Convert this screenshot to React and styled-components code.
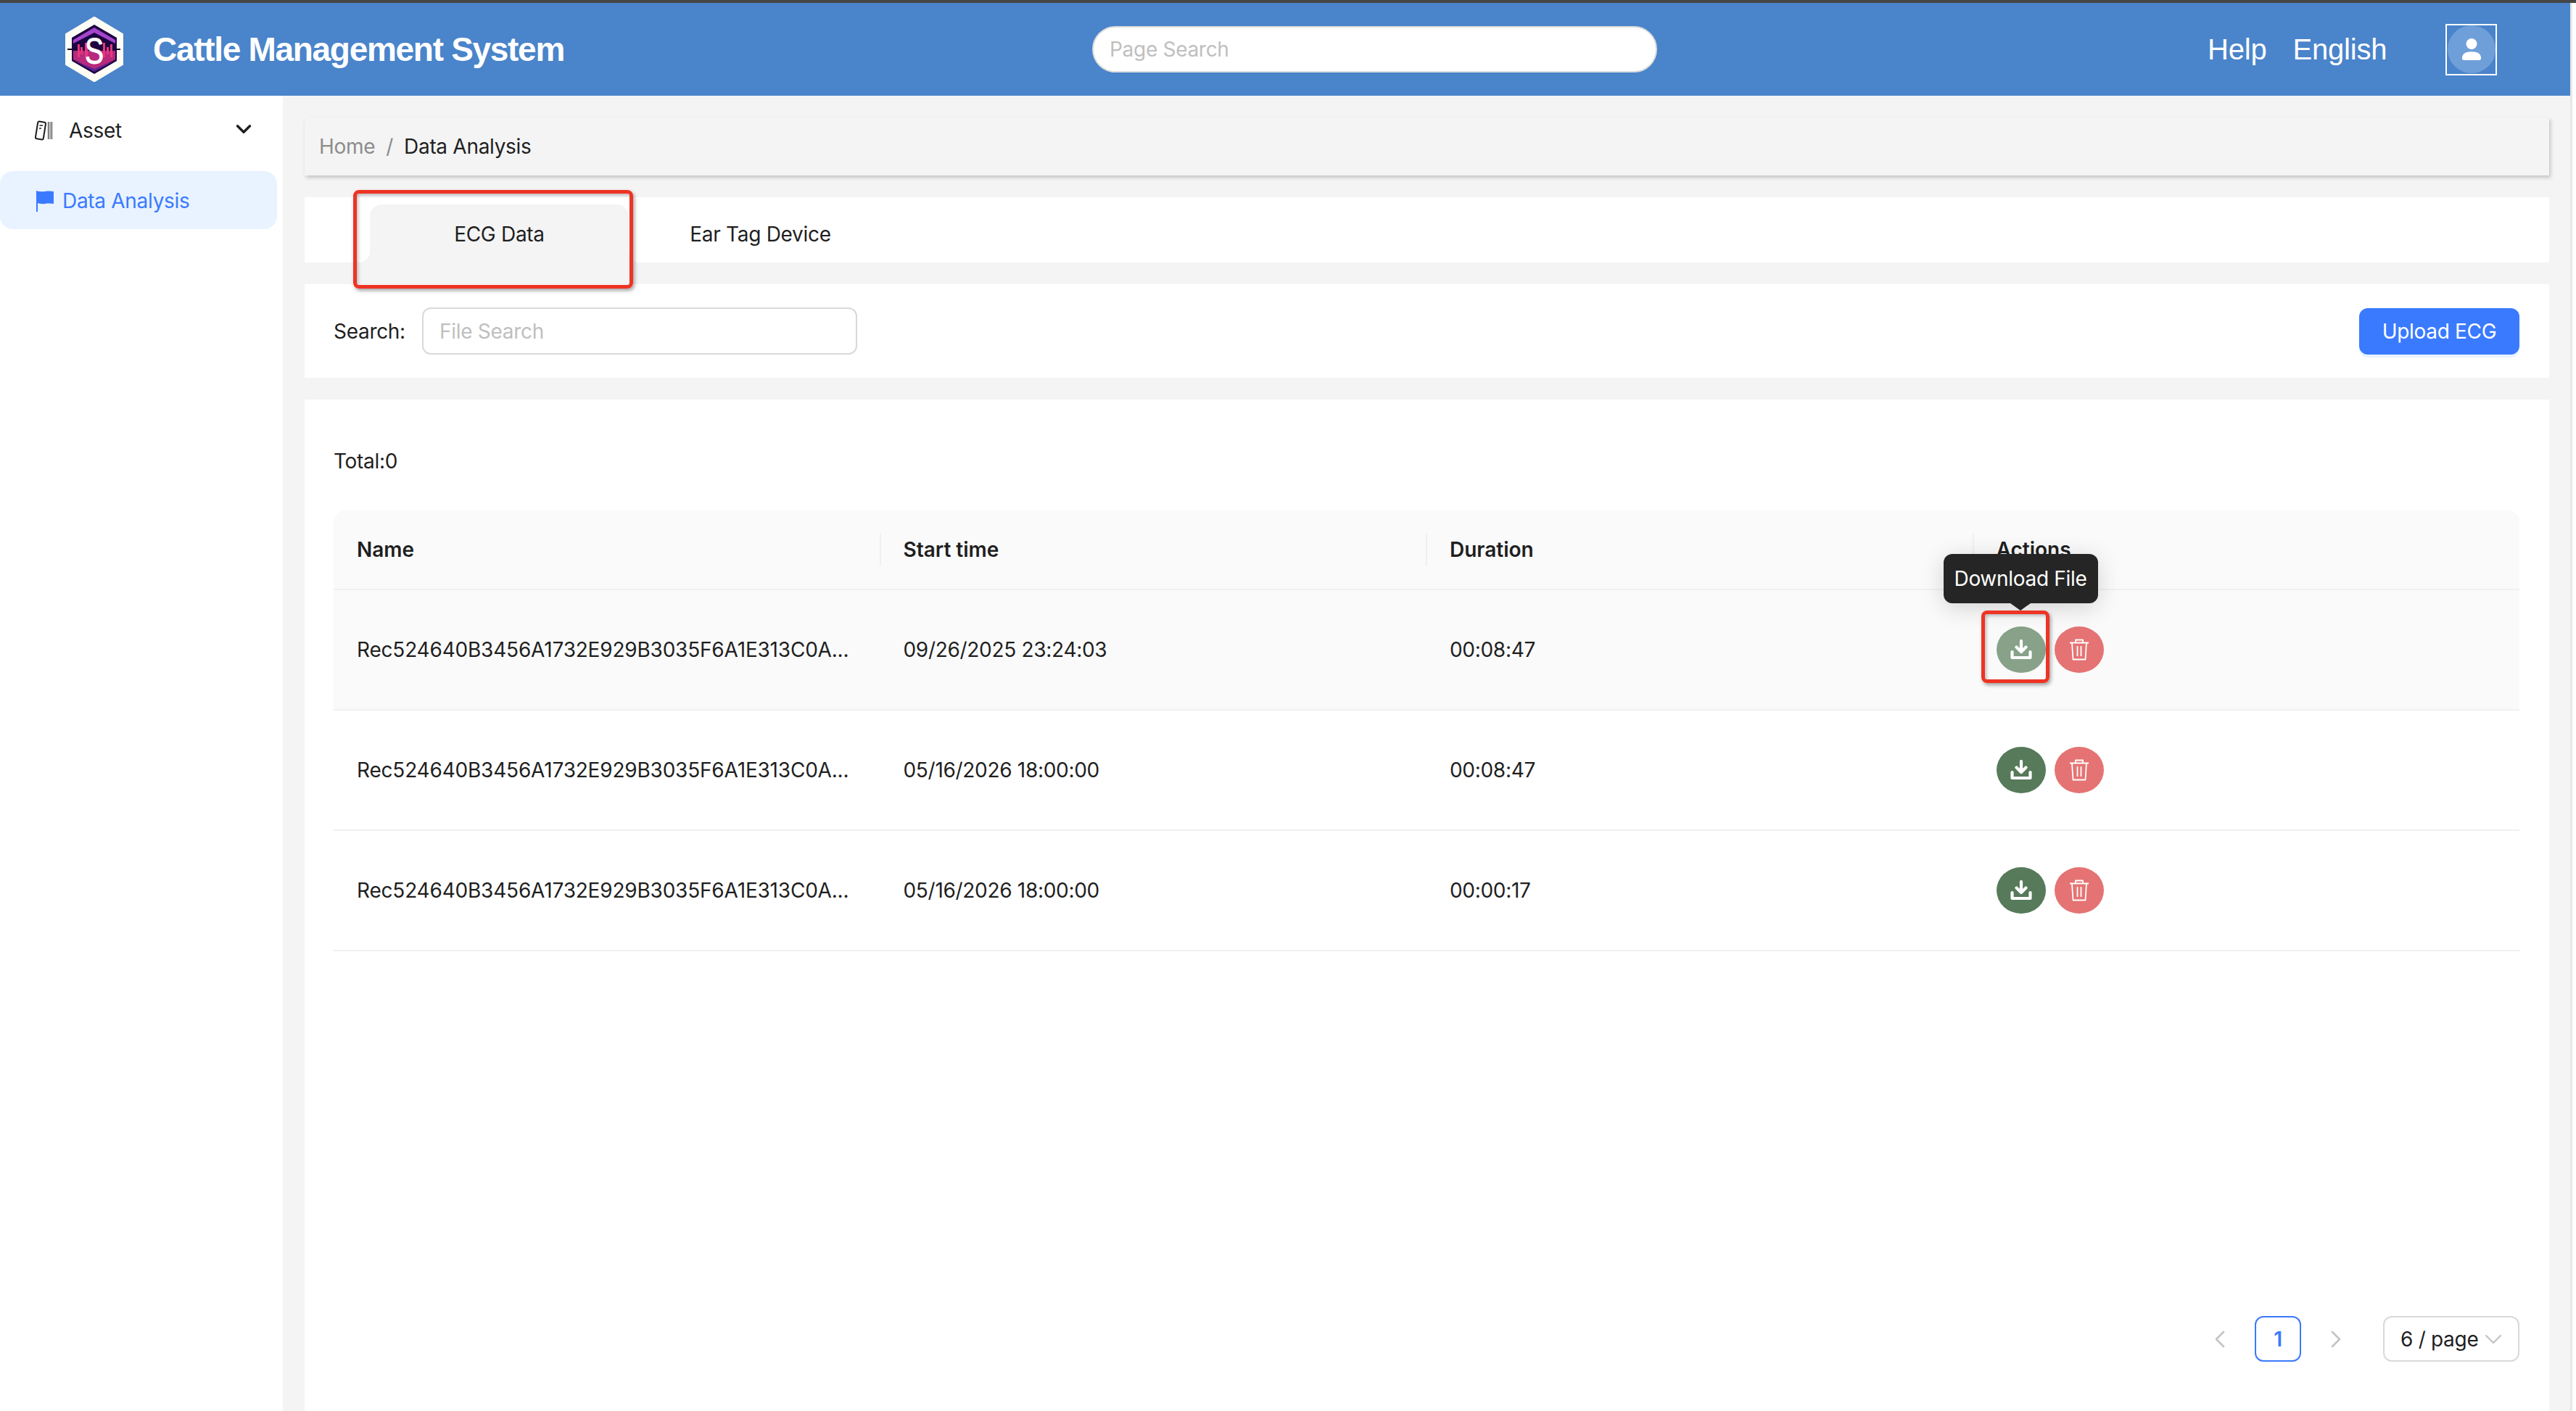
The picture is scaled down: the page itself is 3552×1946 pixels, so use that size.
import React from 'react';
import styled, { createGlobalStyle } from 'styled-components';
import { ChevronDown, ChevronLeft, ChevronRight } from 'lucide-react';

const GlobalStyle = createGlobalStyle`
  html, body {
    margin: 0;
    padding: 0;
    background: #ffffff;
  }
  * {
    box-sizing: border-box;
  }
`;

const Screen = styled.div`
  width: 3552px;
  height: 1946px;
  display: flex;
  flex-direction: column;
  overflow: hidden;
  font-family: Inter, "Liberation Sans", sans-serif;
  font-size: 28px;
  letter-spacing: -0.3px;
  color: #1f1f1f;
`;

const WindowEdge = styled.div`
  height: 4px;
  flex: none;
  background: #454545;
`;

const Frame = styled.div`
  flex: 1;
  display: flex;
  min-height: 0;
`;

const Page = styled.div`
  flex: 1;
  display: flex;
  flex-direction: column;
  min-width: 0;
`;

const Scrollbar = styled.div`
  width: 8px;
  flex: none;
  background: #ffffff;
  border-left: 3px solid #e8e8e8;
`;

const TopBar = styled.header`
  height: 128px;
  flex: none;
  display: grid;
  grid-template-columns: 1506px 779px 1fr;
  align-items: center;
  background: #4a84ca;
  color: #ffffff;
`;

const Brand = styled.div`
  display: flex;
  align-items: center;
  gap: 41px;
  padding-left: 90px;
`;

const BrandName = styled.div`
  font-family: "Liberation Sans", Arial, sans-serif;
  font-weight: 700;
  font-size: 46px;
  letter-spacing: -1.3px;
`;

const PageSearch = styled.input`
  width: 779px;
  height: 64px;
  padding: 0 22px;
  border: 2px solid #dcdcdc;
  border-radius: 32px;
  background: #ffffff;
  font-family: Inter, sans-serif;
  font-size: 28px;
  letter-spacing: -0.3px;
  outline: none;

  &::placeholder {
    color: #bfbfbf;
    opacity: 1;
  }
`;

const TopActions = styled.div`
  display: flex;
  align-items: center;
  padding-left: 759px;
`;

const TopLink = styled.span`
  font-family: "Liberation Sans", Arial, sans-serif;
  font-size: 40px;
  letter-spacing: -0.2px;
  margin-right: ${(p) => p.$gap}px;
`;

const AvatarFrame = styled.div`
  width: 71px;
  height: 71px;
  display: flex;
  align-items: center;
  justify-content: center;
  border: 2px solid #ffffff;
`;

const Avatar = styled.div`
  width: 66px;
  height: 66px;
  display: flex;
  align-items: center;
  justify-content: center;
  border-radius: 50%;
  background: #6f9fd8;
`;

const Body = styled.div`
  flex: 1;
  display: flex;
  min-height: 0;
`;

const Sidebar = styled.aside`
  width: 390px;
  flex: none;
  padding-top: 8px;
  background: #ffffff;
`;

const GroupRow = styled.div`
  height: 80px;
  margin: 0 8px 16px 0;
  padding: 0 29px 0 48px;
  display: flex;
  align-items: center;
  gap: 21px;

  span {
    flex: 1;
  }
`;

const GroupChevron = styled(ChevronDown)`
  margin-top: -4px;
`;

const MenuItem = styled.div`
  height: 80px;
  margin-right: 8px;
  padding: 2px 0 0 50px;
  display: flex;
  align-items: center;
  gap: 12px;
  border-radius: 18px;
  background: #e8f3ff;
  color: #3a7afe;
`;

const Content = styled.main`
  flex: 1;
  min-width: 0;
  display: flex;
  flex-direction: column;
  gap: 30px;
  padding: 30px 29px 0 30px;
  background: #f4f4f4;
`;

const Breadcrumb = styled.nav`
  height: 80px;
  flex: none;
  display: flex;
  align-items: center;
  padding-left: 20px;
  background: #f4f4f4;
  box-shadow: 2px 3px 5px rgba(0, 0, 0, 0.2);
`;

const Crumb = styled.span`
  color: ${(p) => (p.$current ? '#1f1f1f' : '#8c8c8c')};
`;

const CrumbDivider = styled.span`
  margin: 0 15px;
  color: #8c8c8c;
`;

const TabBar = styled.div`
  height: 90px;
  flex: none;
  display: flex;
  align-items: flex-end;
  padding-left: 90px;
  background: #ffffff;
`;

const Tab = styled.div`
  position: relative;
  width: 357px;
  height: 80px;
  padding-top: 2px;
  display: flex;
  align-items: center;
  justify-content: center;
  border-radius: 16px 16px 0 0;
  background: ${(p) => (p.$active ? '#f4f4f4' : 'transparent')};

  & + & {
    margin-left: 3px;
  }

  ${(p) =>
    p.$active &&
    `
    &::before, &::after {
      content: '';
      position: absolute;
      bottom: 0;
      width: 16px;
      height: 16px;
    }
    &::before {
      left: -16px;
      background: radial-gradient(circle at 0 0, #ffffff 16px, #f4f4f4 16.5px);
    }
    &::after {
      right: -16px;
      background: radial-gradient(circle at 100% 0, #ffffff 16px, #f4f4f4 16.5px);
    }
  `}
`;

const Callout = styled.div`
  position: absolute;
  top: ${(p) => p.$top}px;
  left: ${(p) => p.$left}px;
  width: ${(p) => p.$width}px;
  height: ${(p) => p.$height}px;
  border: 5px solid #ee3424;
  border-radius: 8px;
  box-shadow: 2px 3px 5px rgba(0, 0, 0, 0.35), inset 2px 2px 4px rgba(0, 0, 0, 0.25);
  pointer-events: none;
  z-index: 3;
`;

const FilterPanel = styled.section`
  height: 129px;
  flex: none;
  display: flex;
  align-items: center;
  padding: 0 41px 0 40px;
  background: #ffffff;
`;

const FilterLabel = styled.label`
  width: 122px;
`;

const FileSearch = styled.input`
  width: 600px;
  height: 65px;
  padding: 0 22px;
  border: 2px solid #d9d9d9;
  border-radius: 12px;
  font-family: Inter, sans-serif;
  font-size: 28px;
  letter-spacing: -0.3px;
  outline: none;

  &::placeholder {
    color: #bfbfbf;
    opacity: 1;
  }
`;

const UploadButton = styled.button`
  width: 221px;
  height: 64px;
  margin-left: auto;
  border: none;
  border-radius: 12px;
  background: #3a7afe;
  box-shadow: 0 4px 0 #e8f3ff;
  color: #ffffff;
  font-family: Inter, sans-serif;
  font-size: 28px;
  letter-spacing: -0.3px;
`;

const TablePanel = styled.section`
  flex: 1;
  min-height: 0;
  display: flex;
  flex-direction: column;
  padding: 68px 41px 68px 40px;
  background: #ffffff;
`;

const Total = styled.div`
  height: 34px;
  line-height: 34px;
  margin-bottom: 51px;
`;

const Row = styled.div`
  display: grid;
  grid-template-columns: repeat(4, 1fr);
  height: ${(p) => p.$height}px;
  background: ${(p) => (p.$shaded ? '#fafafa' : '#ffffff')};
  border-bottom: 2px solid #f0f0f0;
  border-radius: ${(p) => (p.$head ? '16px 16px 0 0' : '0')};
  font-weight: ${(p) => (p.$head ? 600 : 400)};
`;

const Cell = styled.div`
  position: relative;
  display: flex;
  align-items: center;
  padding-left: 32px;
  white-space: nowrap;
`;

const NameCell = styled(Cell)`
  letter-spacing: -0.2px;
`;

const HeadCell = styled(Cell)`
  letter-spacing: 0;

  &:not(:first-child)::before {
    content: '';
    position: absolute;
    left: -1px;
    top: 32px;
    height: 44px;
    width: 2px;
    background: #f0f0f0;
  }
`;

const RoundButton = styled.button`
  position: relative;
  width: 68px;
  height: 64px;
  padding: 0;
  display: flex;
  align-items: center;
  justify-content: center;
  border: none;
  border-radius: 50%;
  background: ${(p) => p.$color};
`;

const ActionGroup = styled.div`
  display: flex;
  gap: 12px;
`;

const Tooltip = styled.div`
  position: absolute;
  top: -100px;
  left: -73px;
  width: 213px;
  height: 68px;
  display: flex;
  align-items: center;
  justify-content: center;
  border-radius: 12px;
  background: #252525;
  box-shadow: 0 6px 32px rgba(0, 0, 0, 0.16);
  color: #ffffff;
  font-family: Inter, sans-serif;
  font-size: 28px;
  letter-spacing: -0.3px;
  font-weight: 400;
  z-index: 2;

  &::after {
    content: '';
    position: absolute;
    left: 92px;
    bottom: -10px;
    border-style: solid;
    border-width: 10px 14px 0;
    border-color: #252525 transparent transparent;
  }
`;

const Pager = styled.div`
  margin-top: auto;
  display: flex;
  justify-content: flex-end;
  align-items: center;
`;

const PagerArrow = styled.div`
  width: 64px;
  height: 63px;
  display: flex;
  align-items: center;
  justify-content: center;
  color: #c4c4c4;
`;

const PageNumber = styled.div`
  width: 64px;
  height: 63px;
  margin: 0 16px;
  display: flex;
  align-items: center;
  justify-content: center;
  border: 2px solid #3a7afe;
  border-radius: 12px;
  color: #3a7afe;
  font-weight: 600;
`;

const PageSize = styled.div`
  width: 188px;
  height: 63px;
  margin-left: 33px;
  padding: 0 14px 0 22px;
  display: flex;
  align-items: center;
  justify-content: space-between;
  border: 2px solid #d9d9d9;
  border-radius: 12px;
`;

const Logo = () => (
  <svg width="80" height="90" viewBox="0 0 80 90">
    <path d="M40 0 L80 24 V66 L40 90 L0 66 V24 Z" fill="#fdfdf6" stroke="#fdfdf6" strokeLinejoin="round" />
    <path d="M40 11 L71 29 V61 L40 79 L9 61 V29 Z" fill="#1d0540" />
    <path d="M40 15 L69 32 V37 L40 22 L11 37 V32 Z" fill="#a545cc" />
    <path d="M11 47 H69 V59 L40 74 L11 59 Z" fill="#b72a7c" />
    <path d="M11 60 L40 76 L69 60 L40 72 Z" fill="#5c2294" />
    <path d="M17 38h3v18h-3zM27 36h4v20h-4zM52 36h3v20h-3zM62 38h3v18h-3zM21 42h3v10h-3zM57 42h3v10h-3z" fill="#e9367f" />
    <path d="M3 45 H11 M69 45 H76" stroke="#160528" strokeWidth="2" />
    <text transform="translate(40 65) scale(0.78 1)" textAnchor="middle" fontFamily="Liberation Sans, sans-serif" fontSize="50" stroke="#ffffff" strokeWidth="1" fill="#ffffff">S</text>
  </svg>
);

const UserIcon = () => (
  <svg width="28" height="30" viewBox="0 0 30 32" fill="#ffffff">
    <circle cx="15" cy="8" r="8" />
    <path d="M1 29 C1 23 6 19.500 15 19.500 C24 19.500 29 23 29 29 C29 31 28 32 26 32 H4 C2 32 1 31 1 29 Z" />
  </svg>
);

const AssetIcon = () => (
  <svg width="26" height="28" viewBox="0 0 26 28" fill="none" stroke="#1f1f1f">
    <rect x="2.500" y="2" width="11" height="24" rx="2" strokeWidth="2" transform="rotate(9 8 14)" />
    <path d="M6.500 7 H11 M6 11 H9" strokeWidth="1.600" />
    <path d="M18.500 2 V26 M21 2 V26 M23.500 2 V26" strokeWidth="1" />
  </svg>
);

const FlagIcon = () => (
  <svg width="24" height="29" viewBox="0 0 24 29">
    <path d="M0 0 C8 3 14 -1 24 1 V18 C14 16 8 20 2 17 V29 H0 Z" fill="#3a7afe" />
  </svg>
);

const DownloadIcon = () => (
  <svg width="30" height="28" viewBox="0 0 30 28" fill="none" stroke="#ffffff" strokeWidth="4.200" strokeLinecap="round" strokeLinejoin="round">
    <path d="M15 2 V16 M8.500 10.500 L15 17 L21.500 10.500" />
    <path d="M2.500 17 V25 H27.500 V17" />
  </svg>
);

const TrashIcon = () => (
  <svg width="28" height="30" viewBox="0 0 28 30" fill="none" stroke="#ffffff" strokeWidth="1.800" strokeLinejoin="round">
    <path d="M1 5.500 H27 M9 5 V1.500 H19 V5" />
    <path d="M4 5.500 L5.500 28.500 H22.500 L24 5.500" />
    <path d="M11.500 10 V24 M16.500 10 V24" />
  </svg>
);

const RECORDS = [
  { name: 'Rec524640B3456A1732E929B3035F6A1E313C0A...', start: '09/26/2025 23:24:03', duration: '00:08:47', hover: true },
  { name: 'Rec524640B3456A1732E929B3035F6A1E313C0A...', start: '05/16/2026 18:00:00', duration: '00:08:47' },
  { name: 'Rec524640B3456A1732E929B3035F6A1E313C0A...', start: '05/16/2026 18:00:00', duration: '00:00:17' },
];

function App() {
  return (
    <Screen>
      <GlobalStyle />
      <WindowEdge />
      <Frame>
        <Page>
          <TopBar>
            <Brand>
              <Logo />
              <BrandName>Cattle Management System</BrandName>
            </Brand>
            <PageSearch placeholder="Page Search" />
            <TopActions>
              <TopLink $gap={36}>Help</TopLink>
              <TopLink $gap={81}>English</TopLink>
              <AvatarFrame>
                <Avatar>
                  <UserIcon />
                </Avatar>
              </AvatarFrame>
            </TopActions>
          </TopBar>
          <Body>
            <Sidebar>
              <GroupRow>
                <AssetIcon />
                <span>Asset</span>
                <GroupChevron size={34} strokeWidth={2.400} color="#1f1f1f" />
              </GroupRow>
              <MenuItem>
                <FlagIcon />
                Data Analysis
              </MenuItem>
            </Sidebar>
            <Content>
              <Breadcrumb>
                <Crumb>Home</Crumb>
                <CrumbDivider>/</CrumbDivider>
                <Crumb $current>Data Analysis</Crumb>
              </Breadcrumb>
              <TabBar>
                <Tab $active>
                  ECG Data
                  <Callout $top={-20} $left={-23} $width={386} $height={136} />
                </Tab>
                <Tab>Ear Tag Device</Tab>
              </TabBar>
              <FilterPanel>
                <FilterLabel>Search:</FilterLabel>
                <FileSearch placeholder="File Search" />
                <UploadButton>Upload ECG</UploadButton>
              </FilterPanel>
              <TablePanel>
                <Total>Total:0</Total>
                <Row $head $shaded $height={110}>
                  <HeadCell>Name</HeadCell>
                  <HeadCell>Start time</HeadCell>
                  <HeadCell>Duration</HeadCell>
                  <HeadCell>Actions</HeadCell>
                </Row>
                {RECORDS.map((rec, i) => (
                  <Row key={i} $shaded={rec.hover} $height={166}>
                    <NameCell>{rec.name}</NameCell>
                    <Cell>{rec.start}</Cell>
                    <Cell>{rec.duration}</Cell>
                    <Cell>
                      <ActionGroup>
                        <RoundButton $color={rec.hover ? '#88a28a' : '#567a5a'}>
                          <DownloadIcon />
                          {rec.hover && (
                            <>
                              <Tooltip>Download File</Tooltip>
                              <Callout $top={-22} $left={-21} $width={94} $height={100} />
                            </>
                          )}
                        </RoundButton>
                        <RoundButton $color="#e57373">
                          <TrashIcon />
                        </RoundButton>
                      </ActionGroup>
                    </Cell>
                  </Row>
                ))}
                <Pager>
                  <PagerArrow>
                    <ChevronLeft size={40} strokeWidth={1.600} />
                  </PagerArrow>
                  <PageNumber>1</PageNumber>
                  <PagerArrow>
                    <ChevronRight size={40} strokeWidth={1.600} />
                  </PagerArrow>
                  <PageSize>
                    6 / page
                    <ChevronDown size={40} strokeWidth={1.400} color="#c4c4c4" />
                  </PageSize>
                </Pager>
              </TablePanel>
            </Content>
          </Body>
        </Page>
        <Scrollbar />
      </Frame>
    </Screen>
  );
}

export default App;
